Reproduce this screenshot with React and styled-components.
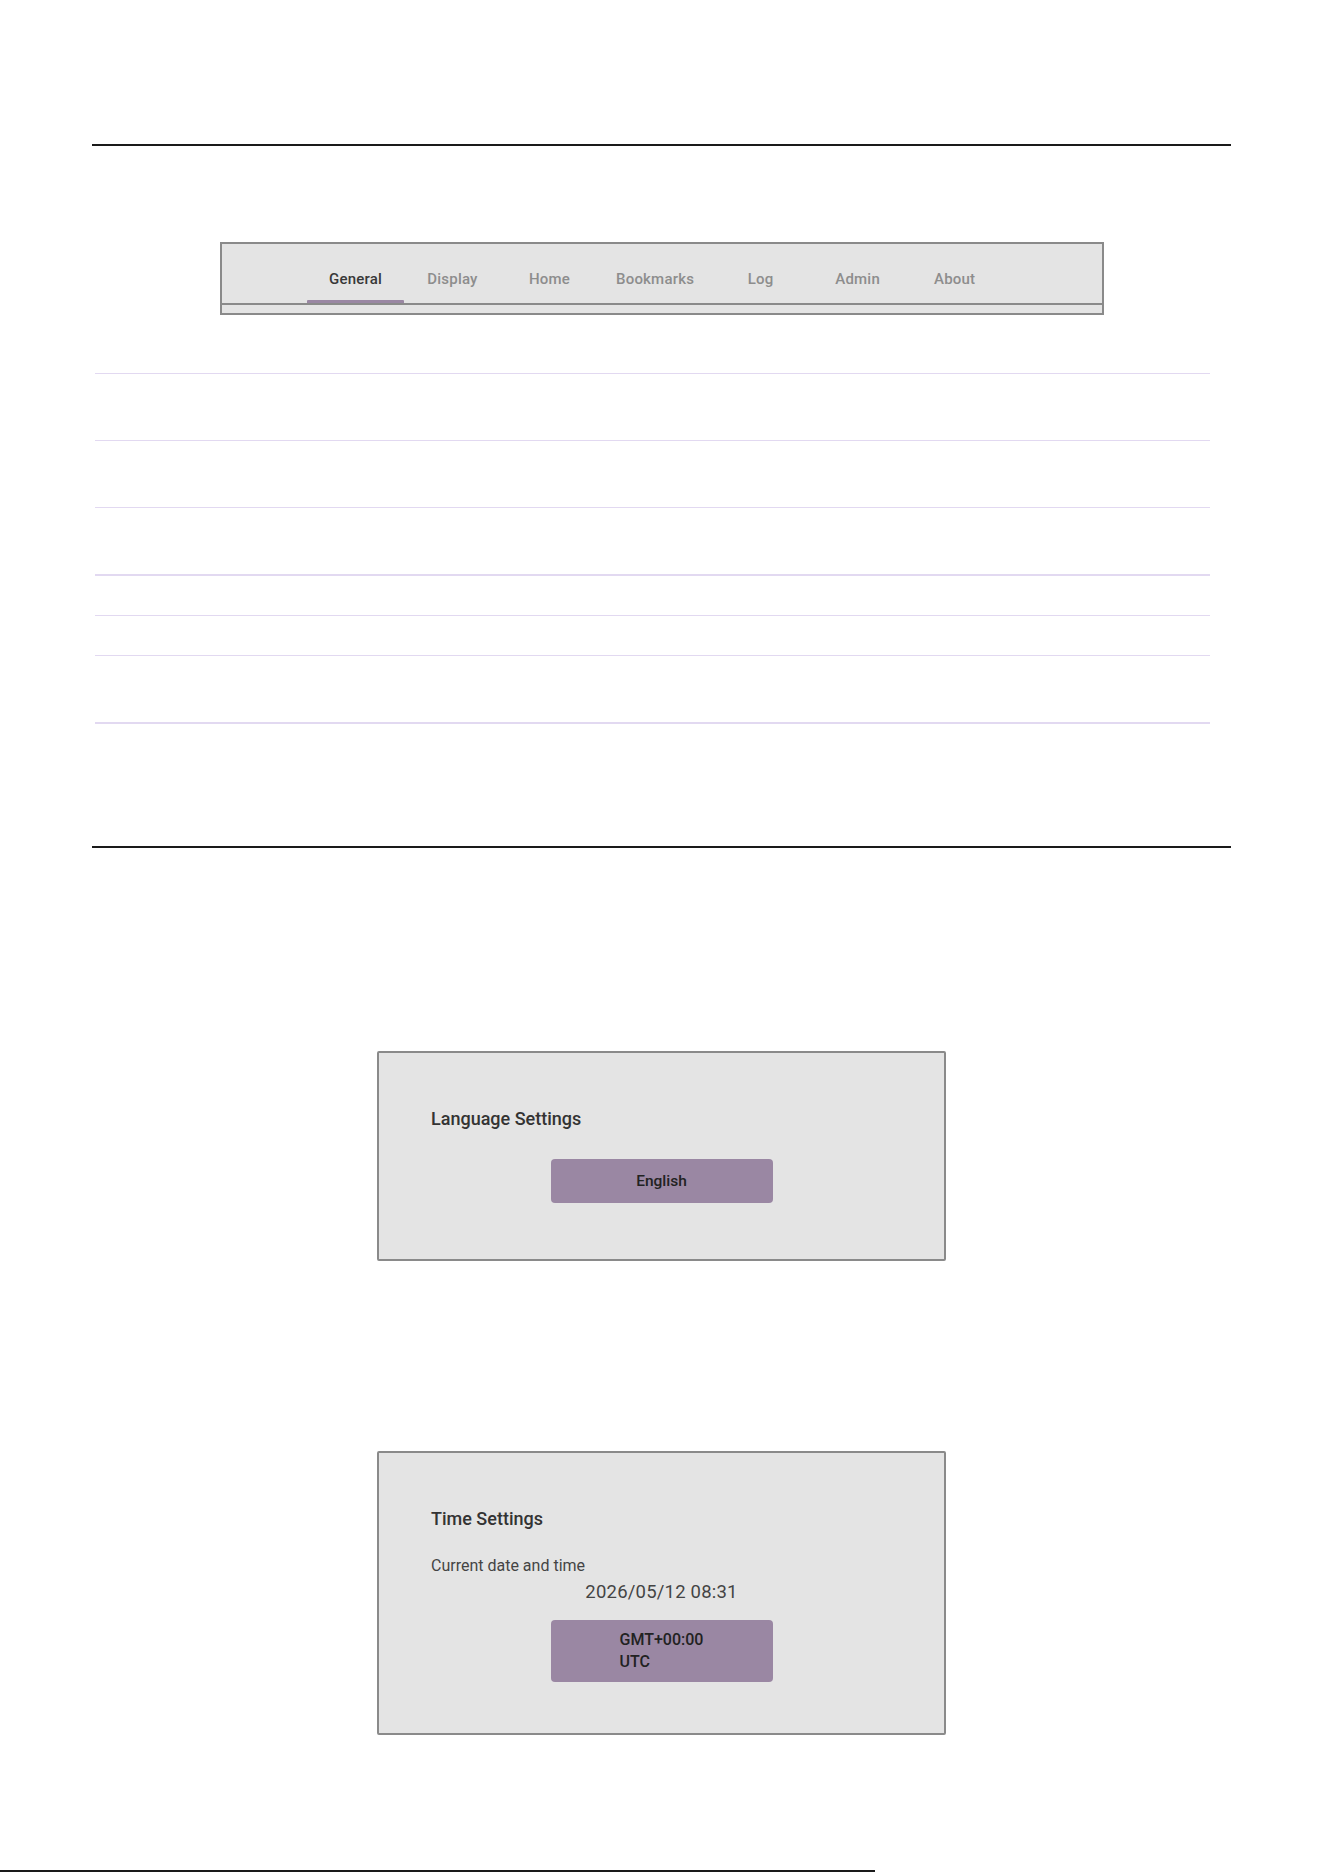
import React from "react";
import styled, { createGlobalStyle } from "styled-components";

const GlobalStyle = createGlobalStyle`
  html, body {
    margin: 0;
    padding: 0;
    background: #ffffff;
    font-family: Roboto, "Noto Sans", "Liberation Sans", sans-serif;
  }
`;

const tabs = ["General", "Display", "Home", "Bookmarks", "Log", "Admin", "About"];

const rows = [
  { h: 66 },
  { h: 66 },
  { h: 66, thick: true },
  { h: 39 },
  { h: 39 },
  { h: 66, thick: true },
];

const Page = styled.div`
  padding-top: 144px;
  width: 1324px;
  height: 1872px;
  box-sizing: border-box;
  overflow: hidden;
`;

const Rule = styled.div`
  height: 2px;
  background: #1a1a1a;
  margin-left: ${(p) => p.$left}px;
  width: ${(p) => p.$width}px;
  margin-top: ${(p) => p.$top || 0}px;
`;

const TabBar = styled.div`
  margin: 96px 0 0 220px;
  width: 884px;
  height: 73px;
  box-sizing: border-box;
  border: 2px solid #8a8a8a;
  background: #e4e4e4;
  display: flex;
  flex-direction: column;
`;

const TabRow = styled.div`
  display: flex;
  height: 59px;
  padding-left: 85px;
`;

const Tab = styled.div`
  position: relative;
  min-width: 97px;
  padding: 10px 18px 0;
  box-sizing: border-box;
  display: flex;
  align-items: center;
  justify-content: center;
  font-size: 15px;
  font-weight: 500;
  letter-spacing: 0.2px;
  color: ${(p) => (p.$active ? "#383838" : "#8d8d8d")};

  &::after {
    content: "";
    display: ${(p) => (p.$active ? "block" : "none")};
    position: absolute;
    left: 0;
    right: 0;
    bottom: 0;
    height: 3px;
    background: #9a87a3;
    border-radius: 1px 1px 0 0;
  }
`;

const TabDivider = styled.div`
  height: 2px;
  background: #8a8a8a;
`;

const List = styled.div`
  margin: 58px 0 0 95px;
  width: 1115px;
  border-top: 1px solid #e2d9f1;
`;

const ListRow = styled.div`
  height: ${(p) => p.$h}px;
  border-bottom: ${(p) => (p.$thick ? 2 : 1)}px solid #e2d9f1;
`;

const Card = styled.div`
  margin: ${(p) => p.$top}px 0 0 377px;
  width: 569px;
  height: ${(p) => p.$height}px;
  box-sizing: border-box;
  border: 2px solid #8a8a8a;
  border-radius: 2px;
  background: #e4e4e4;
  padding: 56px 52px 0;
  display: flex;
  flex-direction: column;
`;

const CardTitle = styled.div`
  font-size: 18px;
  font-weight: 500;
  line-height: 20px;
  color: #333;
`;

const Label = styled.div`
  margin-top: 27px;
  font-size: 16px;
  line-height: 19px;
  color: #444;
`;

const DateText = styled.div`
  align-self: center;
  margin-top: 6px;
  font-size: 18.5px;
  line-height: 22px;
  color: #444;
  letter-spacing: 0.2px;
`;

const SelectButton = styled.button`
  align-self: center;
  margin-top: ${(p) => p.$top}px;
  width: 222px;
  height: ${(p) => p.$height}px;
  border: none;
  border-radius: 4px;
  background: #9a87a3;
  font-family: inherit;
  font-size: ${(p) => p.$size || 15.5}px;
  font-weight: 500;
  color: #222;
  display: flex;
  align-items: center;
  justify-content: center;
  padding: 0;
  cursor: pointer;
`;

const ZoneLines = styled.div`
  text-align: left;
  line-height: 22px;
`;

export default function App() {
  return (
    <>
      <GlobalStyle />
      <Page>
        <Rule $left={92} $width={1139} />
        <TabBar>
          <TabRow>
            {tabs.map((t, i) => (
              <Tab key={t} $active={i === 0}>
                {t}
              </Tab>
            ))}
          </TabRow>
          <TabDivider />
        </TabBar>
        <List>
          {rows.map((r, i) => (
            <ListRow key={i} $h={r.h} $thick={r.thick} />
          ))}
        </List>
        <Rule $left={92} $width={1139} $top={122} />
        <Card $top={203} $height={210}>
          <CardTitle>Language Settings</CardTitle>
          <SelectButton $top={30} $height={44}>
            English
          </SelectButton>
        </Card>
        <Card $top={190} $height={284}>
          <CardTitle>Time Settings</CardTitle>
          <Label>Current date and time</Label>
          <DateText>2026/05/12 08:31</DateText>
          <SelectButton $top={17} $height={62} $size={16}>
            <ZoneLines>
              <div>GMT+00:00</div>
              <div>UTC</div>
            </ZoneLines>
          </SelectButton>
        </Card>
        <Rule $left={0} $width={875} $top={135} />
      </Page>
    </>
  );
}
